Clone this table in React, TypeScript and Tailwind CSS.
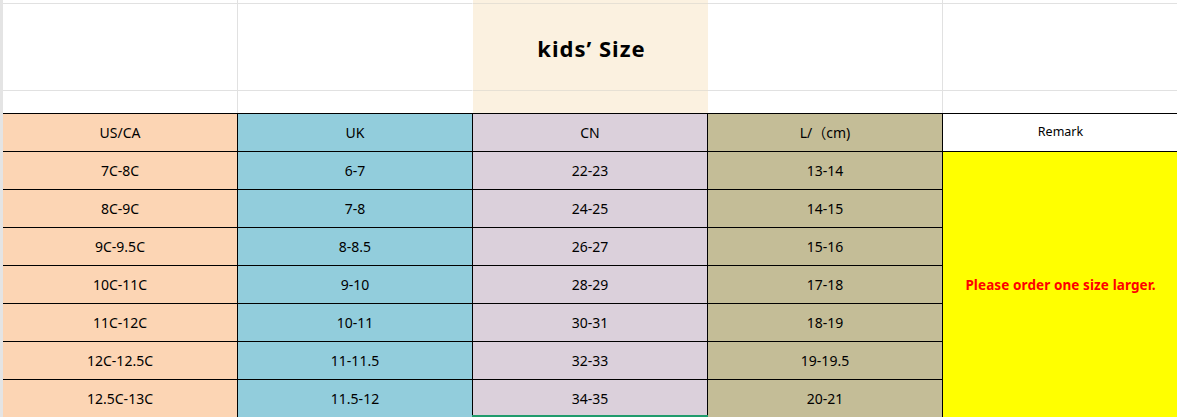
import React from "react";

const rows: string[][] = [
  ["7C-8C", "6-7", "22-23", "13-14"],
  ["8C-9C", "7-8", "24-25", "14-15"],
  ["9C-9.5C", "8-8.5", "26-27", "15-16"],
  ["10C-11C", "9-10", "28-29", "17-18"],
  ["11C-12C", "10-11", "30-31", "18-19"],
  ["12C-12.5C", "11-11.5", "32-33", "19-19.5"],
  ["12.5C-13C", "11.5-12", "34-35", "20-21"],
];

const colBg = ["bg-[#FCD5B4]", "bg-[#92CDDC]", "bg-[#DBD0DB]", "bg-[#C4BD97]"];

export default function App() {
  return (
    <div className="flex w-[1177px] h-[417px] overflow-hidden bg-white text-black font-['Noto_Sans',sans-serif] text-[14px]">
      <div className="w-[3px] shrink-0 bg-[#e4e4e4]" />
      <div className="flex flex-col shrink-0">
        {/* top area */}
        <div className="grid grid-cols-[235px_235px_235px_235px_235px] grid-rows-[4px_87px_22px]">
          {[0, 1, 2].map((r) => (
            <React.Fragment key={r}>
              <div className={`border-r border-[#e1e1e1] ${r < 2 ? "border-b" : ""}`} />
              <div className={`border-r border-r-white border-[#e1e1e1] ${r < 2 ? "border-b" : ""}`} />
              <div
                className={`bg-[#FBF1E0] border-[#e6e0d4] ${r < 2 ? "border-b" : ""} flex items-center justify-center`}
              >
                {r === 1 && (
                  <span className="text-[22px] font-bold leading-none tracking-[1px] pl-[2px] pt-[2px]">kids’ Size</span>
                )}
              </div>
              <div className={`border-r border-[#e1e1e1] ${r < 2 ? "border-b" : ""}`} />
              <div className={`border-[#e1e1e1] ${r < 2 ? "border-b" : ""}`} />
            </React.Fragment>
          ))}
        </div>
        {/* table */}
        <div className="flex border-t border-black">
          <div className="flex flex-col">
            <div className="flex h-[38px] border-b border-black">
              {["US/CA", "UK", "CN", "L/（cm)"].map((h, i) => (
                <div
                  key={h}
                  className={`w-[235px] border-r border-black flex items-center justify-center ${colBg[i]}`}
                >
                  {h === "L/（cm)" ? (
                    <span>
                      L/<span className="font-['Noto_Sans_CJK_SC',sans-serif]">（</span>cm)
                    </span>
                  ) : (
                    h
                  )}
                </div>
              ))}
            </div>
            {rows.map((row, ri) => (
              <div key={ri} className="flex h-[38px] border-b border-black">
                {row.map((c, ci) => (
                  <div
                    key={ci}
                    className={`relative w-[235px] border-r border-black flex items-center justify-center ${colBg[ci]}`}
                  >
                    {c}
                    {ri === rows.length - 1 && ci === 2 && (
                      <div className="absolute left-[-1px] right-[-1px] bottom-[-1px] h-[3px] bg-[#1f9b6c]" />
                    )}
                  </div>
                ))}
              </div>
            ))}
          </div>
          <div className="w-[235px] flex flex-col">
            <div className="h-[38px] border-b border-black bg-white flex items-center justify-center text-[12.5px]">
              Remark
            </div>
            <div className="flex-1 bg-[#FFFF00] flex items-center justify-center pb-[1px]">
              <span className="text-[#FF0000] font-bold text-[13.5px] tracking-[0.1px] pt-[2px]">
                Please order one size larger.
              </span>
            </div>
          </div>
        </div>
      </div>
    </div>
  );
}
